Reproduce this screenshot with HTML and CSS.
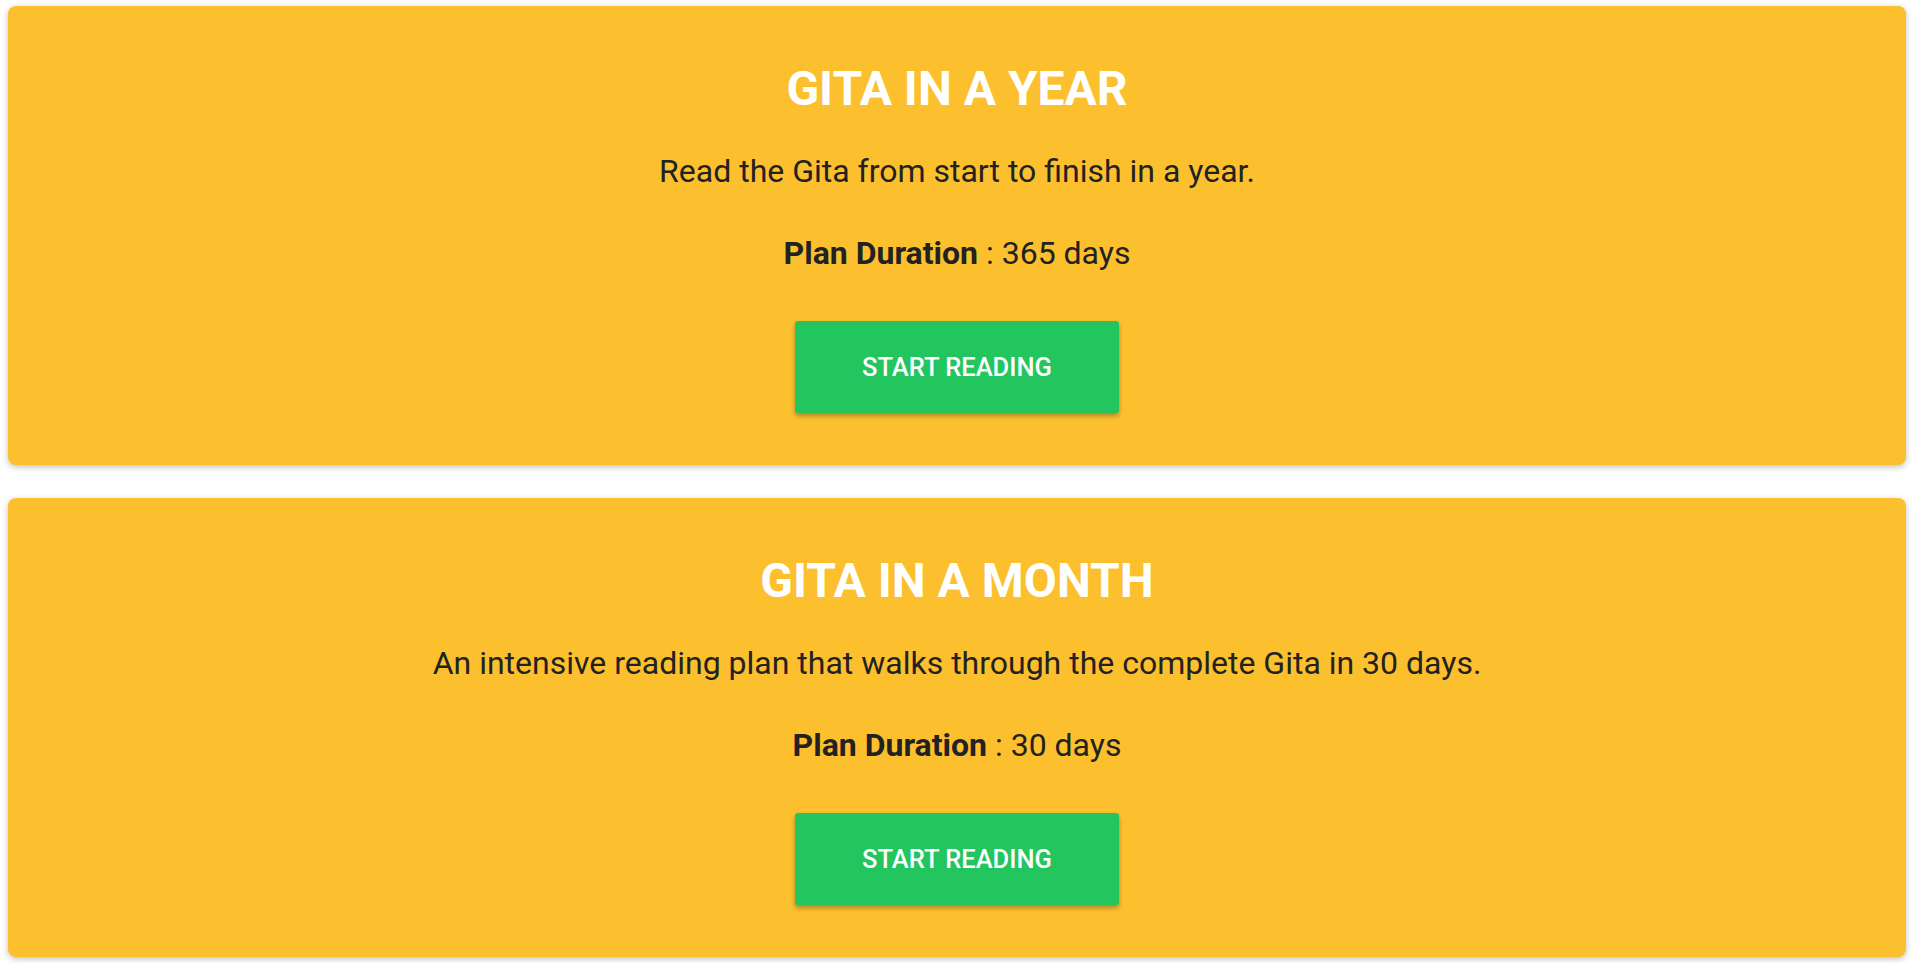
FILE: index.html
```html
<!DOCTYPE html>
<html lang="en">
<head>
  <meta charset="UTF-8" />
  <meta name="viewport" content="width=device-width, initial-scale=1.0"/>
  <title>Reading Plans</title>
  <link rel="stylesheet" href="styles.css">
</head>
<body>
  <div class="plans">
    <div class="plan-card">
      <h2>GITA IN A YEAR</h2>
      <p class="desc">Read the Gita from start to finish in a year.</p>
      <p class="duration"><strong>Plan Duration</strong> : 365 days</p>
      <button class="button" type="button">START READING</button>
    </div>

    <div class="plan-card">
      <h2>GITA IN A MONTH</h2>
      <p class="desc">An intensive reading plan that walks through the complete Gita in 30 days.</p>
      <p class="duration"><strong>Plan Duration</strong> : 30 days</p>
      <button class="button" type="button">START READING</button>
    </div>
  </div>
</body>
</html>
```

FILE: styles.css
```css
body {
  font-family: Roboto, "Noto Sans", Arial, sans-serif;
  background-color: #fff;
  color: #222;
  margin: 0;
  padding: 0;
}
.plans {
  display: flex;
  flex-direction: column;
  gap: 33px;
  padding: 6px 8px;
}
.plan-card {
  display: flex;
  flex-direction: column;
  align-items: center;
  height: 459px;
  box-sizing: border-box;
  padding: 54px 24px 0;
  background-color: #FCC02F;
  border-radius: 8px;
  box-shadow: 0 2px 6px rgba(0, 0, 0, 0.25);
  text-align: center;
}
h2 {
  margin: 0;
  font-size: 48px;
  font-weight: 700;
  line-height: 58px;
  color: #fff;
}
.desc {
  margin: 34px 0 0;
  font-size: 32px;
  line-height: 39px;
}
.duration {
  margin: 43px 0 0;
  font-size: 32px;
  line-height: 39px;
}
.button {
  margin-top: 48px;
  width: 324px;
  height: 92px;
  background-color: #22C55E;
  color: #fff;
  border: none;
  border-radius: 3px;
  font-family: inherit;
  font-size: 25.5px;
  font-weight: 500;
  box-shadow: 0 3px 5px rgba(0, 0, 0, 0.3);
  cursor: pointer;
}
.button:hover {
  background-color: #1DB154;
}
```
